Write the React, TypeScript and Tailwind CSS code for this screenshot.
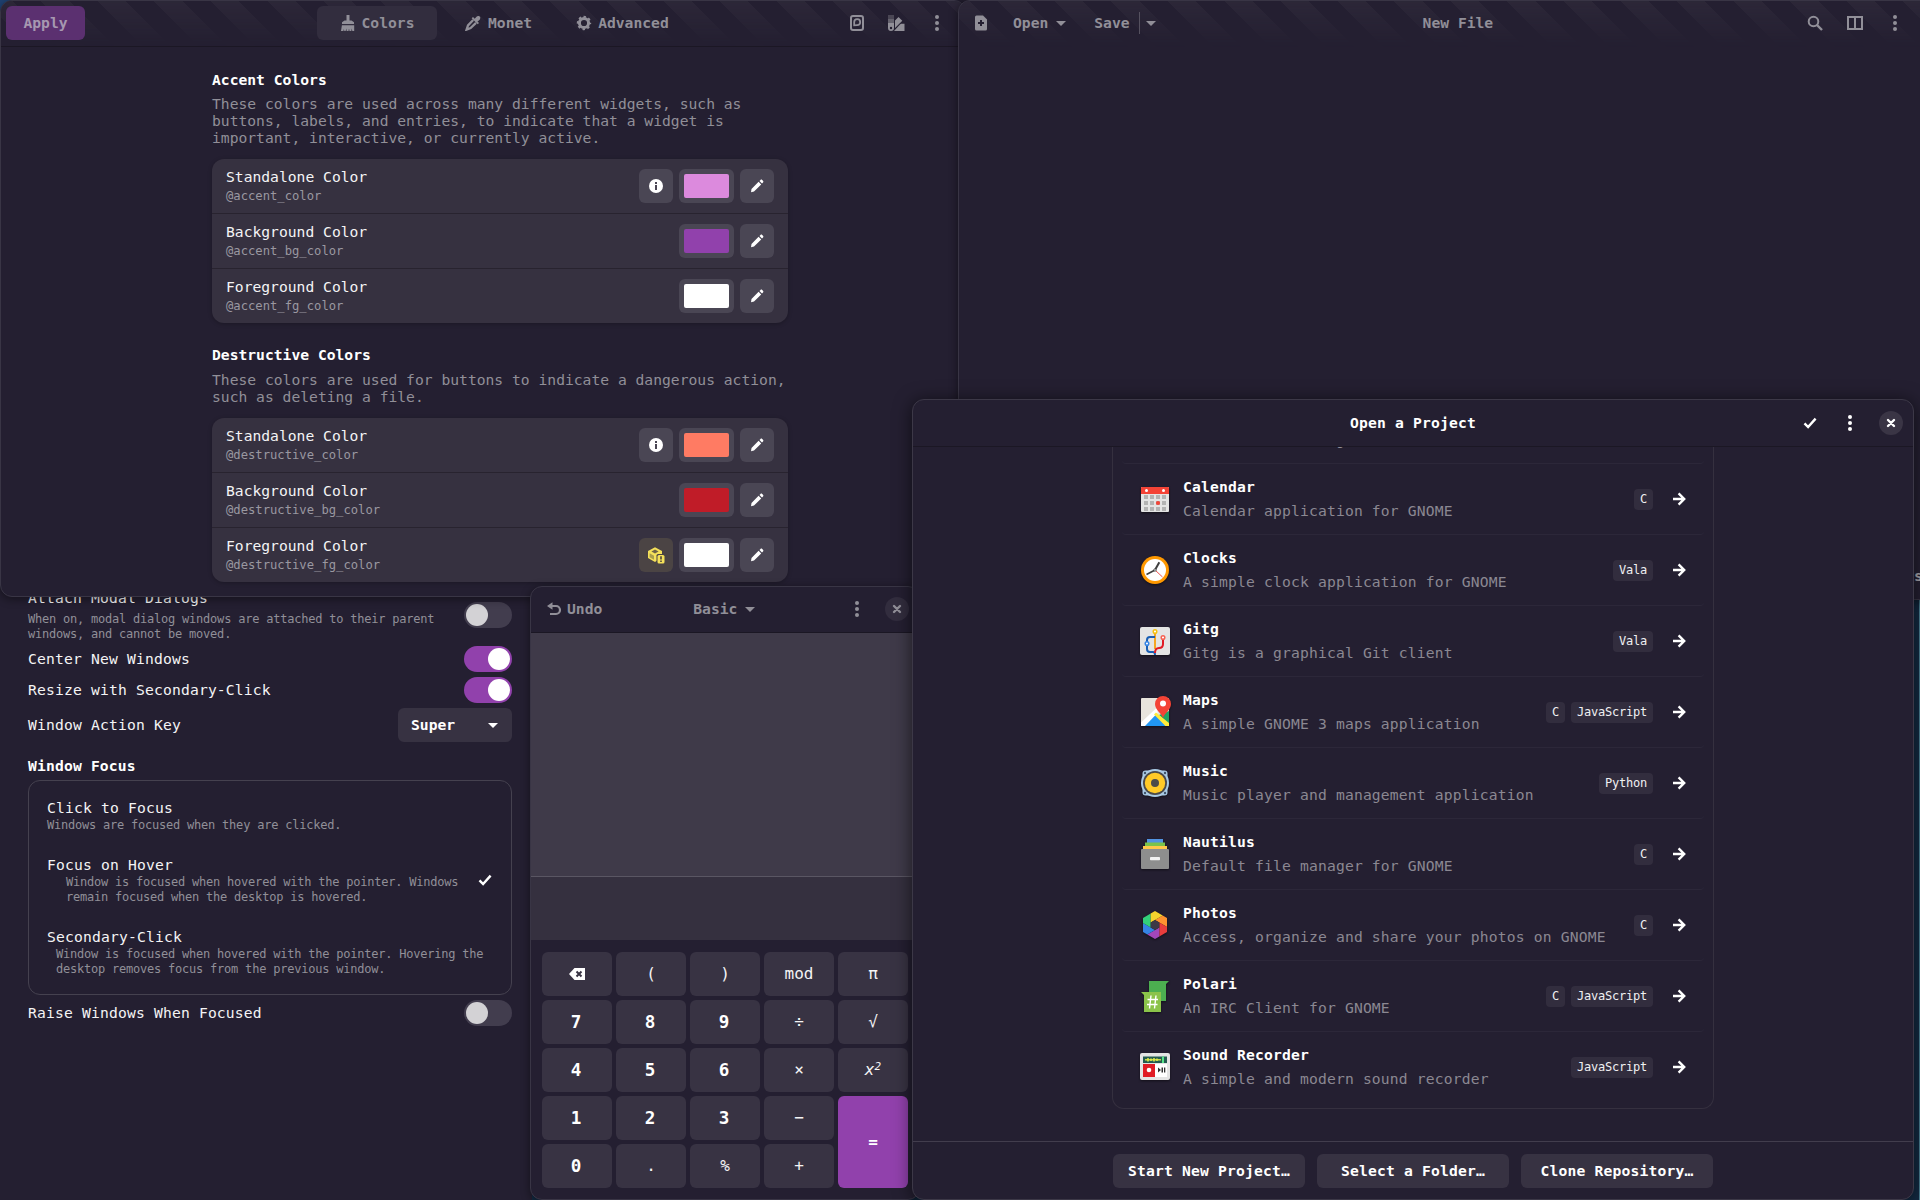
import React from "react";

type P = { className?: string };

const Dots = ({ className = "" }: P) => (
  <svg width="16" height="16" viewBox="0 0 16 16" fill="currentColor" className={className}>
    <circle cx="8" cy="2" r="2" /><circle cx="8" cy="8" r="2" /><circle cx="8" cy="14" r="2" />
  </svg>
);
const Caret = ({ className = "" }: P) => (
  <svg width="16" height="16" viewBox="0 0 16 16" fill="currentColor" className={className}><path d="M3 6h10l-5 5z" /></svg>
);
const Check = ({ className = "" }: P) => (
  <svg width="16" height="16" viewBox="0 0 16 16" fill="none" stroke="currentColor" strokeWidth="2.4" className={className}><path d="M2.5 8.300l3.600 3.700L13.600 3.600" /></svg>
);
const Close = () => (
  <svg width="16" height="16" viewBox="0 0 16 16" fill="none" stroke="currentColor" strokeWidth="2.4" strokeLinecap="round"><path d="M5 5l6 6M11 5l-6 6" /></svg>
);
const Pencil = () => (
  <svg width="16" height="16" viewBox="0 0 16 16" fill="currentColor"><path d="M9.600 3.800l2.600 2.600-7.200 7.200L2 14.200l.5-3.300zM10.500 2.900l1-1c.5-.5 1.200-.5 1.700 0l.8.8c.5.5.5 1.200 0 1.700l-1 1z" /></svg>
);
const Info = () => (
  <svg width="16" height="16" viewBox="0 0 16 16"><circle cx="8" cy="8" r="7" fill="#fff" /><path d="M7 4h2v2H7zM7 7h2v5H7z" fill="#4a4654" /></svg>
);
const Package = () => (
  <svg width="18" height="18" viewBox="0 0 18 18">
    <path d="M8 1.2L15 5v6l-7 5-7-4V5z" fill="#f5e15a" /><path d="M8 3.4l3.6 2L8 7.6 4.4 5.4z" fill="#6d6348" /><path d="M2.6 7.3L7 9.8v4L2.600 11.300z" fill="#a99d4d" />
    <rect x="9.500" y="8" width="8.500" height="9.500" rx="1.500" fill="#4b4444" /><rect x="10.500" y="9" width="7" height="8.500" rx="1.500" fill="#f5e15a" /><path d="M13.200 10.200h1.600v3.400h-1.600zM13.200 14.400h1.600V16h-1.600z" fill="#4b443f" />
  </svg>
);

const swatches: Record<string, string> = {
  pink: "bg-[#dc8add]", purple: "bg-[#9141ac]", white: "bg-white", salmon: "bg-[#ff7b63]", red: "bg-[#c01c28]",
};

function ColorRow({ title, name, color, extra, last }: { title: string; name: string; color: string; extra?: "info" | "pkg"; last?: boolean }) {
  return (
    <div className={last ? "flex h-[54px] items-center pl-[14px] pr-[14px]" : "flex h-[55px] items-center border-b border-[#28232f] pl-[14px] pr-[14px]"}>
      <div className="flex-1">
        <div className="h-[20px] text-[14.67px] leading-[19px] text-[#f4f4f5]">{title}</div>
        <div className="h-[18px] text-[12.2px] leading-[19px] text-[#9a98a0]">{name}</div>
      </div>
      <div className="flex gap-[6px]">
        {extra === "info" && <div className="flex size-[34px] items-center justify-center rounded-md bg-[#4a4654]"><Info /></div>}
        {extra === "pkg" && <div className="flex size-[34px] items-center justify-center rounded-md bg-[#4b4444]"><Package /></div>}
        <div className="flex h-[34px] w-[55px] items-center justify-center rounded-md bg-[#4a4654]">
          <div className={"h-6 w-[45px] rounded-[2px] " + swatches[color]} />
        </div>
        <div className="flex size-[34px] items-center justify-center rounded-md bg-[#4a4654] text-white"><Pencil /></div>
      </div>
    </div>
  );
}

const Stripes = () => (
  <div className="absolute inset-0 bg-[repeating-linear-gradient(45deg,transparent_0px,transparent_20px,#2c2738_20px,#2c2738_40px)] [mask-image:linear-gradient(to_bottom,black,transparent)]" />
);

function Gradience() {
  return (
    <div className="absolute left-0 top-0 z-20 h-[597px] w-[966px] overflow-hidden rounded-xl border border-[#393545] bg-[#241f31] shadow-[0_2px_10px_rgba(0,0,0,0.45)]">
      <div className="relative h-[46px] border-b border-[#1b1724]">
        <Stripes />
        <div className="relative flex h-[44px] items-center pl-[5px] text-[#918f98]">
          <div className="flex h-[34px] w-[79px] items-center justify-center rounded-md bg-[#5b3070] pb-[1px] text-[14.67px] font-bold text-[#a698b0]">Apply</div>
          <div className="ml-[232px] flex h-[34px] w-[120px] items-center justify-center gap-[6px] rounded-md bg-[#322d3e] text-[14.67px] font-bold">
            <svg width="16" height="16" viewBox="0 0 16 16" fill="currentColor"><path d="M6.500 0h3v5.500h2L14 7.200V9H2V7.200l2.500-1.700h2zM1.900 10.200h12.300V16h-1.900l-.5-2.500-.5 2.500H9.500L9 13.500 8.500 16H6.700l-.5-2.500-.5 2.500H4.300l-.4-2-.5 2H1z" /></svg>
            <span className="-mt-[1px]">Colors</span>
          </div>
          <div className="ml-[28px] flex items-center gap-[6px] text-[14.67px] font-bold">
            <svg width="16" height="16" viewBox="0 0 16 16"><path d="M8 2l6 6-1.300 1.300-6-6z" fill="currentColor" /><path d="M9.500 4l2-2.300c1.200-1.600 5.400-.7 3.200 3L12 7z" fill="currentColor" /><path d="M8.200 5L3 10.400 1.600 14.600l4-1.600L11 7.800" fill="none" stroke="currentColor" strokeWidth="2.300" /></svg>
            <span className="-mt-[1px] ml-[1px]">Monet</span>
          </div>
          <div className="ml-[44px] flex items-center gap-[6px] text-[14.67px] font-bold">
            <svg width="16" height="16" viewBox="0 0 16 16" fill="none" stroke="currentColor"><circle cx="8" cy="8" r="4.600" strokeWidth="3" /><circle cx="8" cy="8" r="6.200" strokeWidth="2" strokeDasharray="2.435 2.435" strokeDashoffset="1.220" /></svg>
            <span className="-mt-[1px]">Advanced</span>
          </div>
          <div className="ml-[180px] flex items-center gap-[23px]">
            <svg width="16" height="16" viewBox="0 0 16 16" fill="none" stroke="currentColor" strokeWidth="2"><rect x="2" y="1" width="12" height="14" rx="2" /><path d="M5.200 10.300V7A3 3 0 1 1 8.200 10.200z" strokeWidth="1.800" /></svg>
            <svg width="17" height="16" viewBox="0 0 17 16" fill="currentColor"><path d="M0 0h6v4H0z" opacity=".35" /><path d="M0 4h6v4H0z" opacity=".6" /><path fillRule="evenodd" d="M0 8h6v5a3 3 0 0 1-6 0zM3 11.800a1.200 1.200 0 1 0 0 2.400 1.200 1.200 0 0 0 0-2.400" /><path d="M7 5.500L10.500 2l3.800 3.800L7 13zM12 9.500l1-.7h3.500V16H6z" /></svg>
            <Dots className="ml-[1px]" />
          </div>
        </div>
      </div>
      <div className="ml-[211px] w-[576px] pt-[23px]">
        <h2 className="h-[20px] text-[14.67px] font-bold leading-[20px] text-white">Accent Colors</h2>
        <p className="mt-[5px] whitespace-nowrap text-[14.67px] leading-[17px] text-[#918f98]">These colors are used across many different widgets, such as<br />buttons, labels, and entries, to indicate that a widget is<br />important, interactive, or currently active.</p>
        <div className="mt-[13px] h-[164px] overflow-hidden rounded-xl bg-[#363140] shadow-[0_1px_4px_rgba(0,0,0,0.25)]">
          <ColorRow title="Standalone Color" name="@accent_color" color="pink" extra="info" />
          <ColorRow title="Background Color" name="@accent_bg_color" color="purple" />
          <ColorRow title="Foreground Color" name="@accent_fg_color" color="white" last />
        </div>
        <h2 className="mt-[22px] h-[20px] text-[14.67px] font-bold leading-[20px] text-white">Destructive Colors</h2>
        <p className="mt-[6px] whitespace-nowrap text-[14.67px] leading-[17px] text-[#918f98]">These colors are used for buttons to indicate a dangerous action,<br />such as deleting a file.</p>
        <div className="mt-[13px] h-[164px] overflow-hidden rounded-xl bg-[#363140] shadow-[0_1px_4px_rgba(0,0,0,0.25)]">
          <ColorRow title="Standalone Color" name="@destructive_color" color="salmon" extra="info" />
          <ColorRow title="Background Color" name="@destructive_bg_color" color="red" />
          <ColorRow title="Foreground Color" name="@destructive_fg_color" color="white" extra="pkg" last />
        </div>
      </div>
    </div>
  );
}

function Editor() {
  return (
    <div className="absolute left-[958px] top-0 z-20 h-[600px] w-[1002px] overflow-hidden rounded-xl border border-[#393545] bg-[#241f31] shadow-[0_2px_10px_rgba(0,0,0,0.45)]">
      <div className="relative h-[46px]">
        <Stripes />
        <div className="relative flex h-[44px] items-center pl-[14px] text-[14.67px] font-bold text-[#918f98]">
          <svg width="16" height="16" viewBox="0 0 16 16"><path d="M2 2a1.500 1.500 0 0 1 1.500-1.500H10l4 4V14a1.500 1.500 0 0 1-1.500 1.500h-9A1.500 1.500 0 0 1 2 14z" fill="currentColor" /><path d="M8 5v6M5 8h6" stroke="#241f31" strokeWidth="2" /></svg>
          <span className="-mt-[1px] ml-[24px]">Open</span><Caret className="ml-[5px]" />
          <span className="-mt-[1px] ml-[25px]">Save</span>
          <span className="ml-[9px] h-[22px] w-px bg-[#55515f]" /><Caret className="ml-[3px]" />
          <span className="-mt-[1px] ml-[264px]">New File</span>
          <div className="ml-[314px] flex items-center gap-6">
            <svg width="16" height="16" viewBox="0 0 16 16" fill="none" stroke="currentColor" strokeWidth="2"><circle cx="6.500" cy="6.500" r="4.800" /><path d="M10 10l5 5" strokeWidth="2.400" /></svg>
            <svg width="16" height="16" viewBox="0 0 16 16" fill="none" stroke="currentColor" strokeWidth="2"><path d="M1 2h14v12H1zM8 2v12" /></svg>
            <Dots />
          </div>
        </div>
      </div>
      <div className="mt-[519px] h-[24px] pl-[955px] text-[14.67px] font-bold leading-[20px] text-[#a9a7ae]">s</div>
    </div>
  );
}

function Toggle({ on }: { on?: boolean }) {
  return on ? (
    <span className="flex h-[26px] w-[48px] items-center justify-end rounded-full bg-[#9141ac] p-[2px]"><span className="size-[22px] rounded-full bg-white" /></span>
  ) : (
    <span className="flex h-[26px] w-[48px] items-center rounded-full bg-[#423d4e] p-[2px]"><span className="size-[22px] rounded-full bg-[#d3d2d5]" /></span>
  );
}

const LABEL = "text-[14.67px] leading-[20px] tracking-[0.17px] text-[#f4f4f5] whitespace-pre";
const SMALL = "text-[12px] leading-[15px] tracking-[-0.22px] text-[#918f98] whitespace-pre";

function Tweaks() {
  return (
    <div className="absolute left-0 top-[580px] z-10 h-[620px] w-[532px] bg-[#241f31] pl-[28px] pr-[20px]">
      <div className="flex h-[62px] items-start justify-between pt-[8px]">
        <div>
          <div className={LABEL}>Attach Modal Dialogs</div>
          <div className={"mt-[4px] " + SMALL}>{"When on, modal dialog windows are attached to their parent\nwindows, and cannot be moved."}</div>
        </div>
        <span className="mt-[14px]"><Toggle /></span>
      </div>
      <div className="mt-[4px] flex h-[26px] items-center justify-between"><span className={LABEL}>Center New Windows</span><Toggle on /></div>
      <div className="mt-[5px] flex h-[26px] items-center justify-between"><span className={LABEL}>Resize with Secondary-Click</span><Toggle on /></div>
      <div className="mt-[5px] flex h-[34px] items-center justify-between">
        <span className={LABEL}>Window Action Key</span>
        <span className="flex h-[34px] w-[114px] items-center justify-between rounded-md bg-[#373242] pl-[13px] pr-[11px] text-[14.67px] font-bold text-white">Super<Caret /></span>
      </div>
      <div className="mt-[14px] h-[20px] text-[14.67px] font-bold leading-[20px] tracking-[0.16px] text-white">Window Focus</div>
      <div className="mt-[4px] h-[215px] rounded-xl border border-[#45414f] pl-[18px] pt-[17px]">
        <div className={LABEL}>Click to Focus</div>
        <div className={SMALL}>Windows are focused when they are clicked.</div>
        <div className="relative mt-[22px]">
          <div className={LABEL}>Focus on Hover</div>
          <div className={"pl-[19px] " + SMALL}>{"Window is focused when hovered with the pointer. Windows\nremain focused when the desktop is hovered."}</div>
          <Check className="absolute right-[18px] top-[17px] text-white" />
        </div>
        <div className="mt-[22px]">
          <div className={LABEL}>Secondary-Click</div>
          <div className={"pl-[9px] " + SMALL}>{"Window is focused when hovered with the pointer. Hovering the\ndesktop removes focus from the previous window."}</div>
        </div>
      </div>
      <div className="mt-[5px] flex h-[26px] items-center justify-between"><span className={LABEL}>Raise Windows When Focused</span><Toggle /></div>
    </div>
  );
}

const KEY = "flex items-center justify-center rounded-md bg-[#383343] text-[16px] text-[#f4f4f5]";
const DIGIT = "flex items-center justify-center rounded-md bg-[#383343] pr-[2px] text-[17.6px] font-bold text-white";

function Calculator() {
  const keys = ["⌫", "(", ")", "mod", "π", "7", "8", "9", "÷", "√", "4", "5", "6", "×", "x", "1", "2", "3", "−", "=", "0", ".", "%", "+"];
  return (
    <div className="absolute left-[530px] top-[586px] z-30 h-[614px] w-[390px] overflow-hidden rounded-xl border border-[#393545] bg-[#241f31] shadow-[0_2px_10px_rgba(0,0,0,0.45)]">
      <div className="flex h-[46px] items-center border-b border-[#1b1724] pb-[2px] pl-[15px] text-[14.67px] font-bold text-[#918f98]">
        <svg width="16" height="16" viewBox="0 0 16 16" fill="none" stroke="currentColor" strokeWidth="2.200"><path d="M3 5h7a4 4 0 0 1 0 8H4" /><path d="M6.500 1.200v7.600L1 5z" fill="currentColor" stroke="none" /></svg>
        <span className="ml-[5px]">Undo</span>
        <span className="ml-[91px]">Basic</span><Caret className="ml-[5px]" />
        <Dots className="ml-[91px]" />
        <span className="ml-[20px] flex size-6 items-center justify-center rounded-full bg-[#322d3e]"><Close /></span>
      </div>
      <div className="h-[243px] bg-[#3f3a49]" />
      <div className="h-[64px] border-t border-[#5a5663] bg-[#35303f]" />
      <div className="ml-[11px] mt-[12px] grid w-[366px] auto-rows-[44px] grid-cols-5 gap-x-[4px] gap-y-[4px]">
        {keys.map((k) => {
          if (k === "=") return <div key={k} className="row-span-2 flex items-center justify-center rounded-md bg-[#9141ac] text-[16px] font-bold text-white">=</div>;
          if (k === "⌫") return (
            <div key={k} className={KEY}>
              <svg width="16" height="16" viewBox="0 0 16 16"><path d="M5.500 2H16v12H5.500L0 8z" fill="#fff" /><path d="M7.500 5.500l5 5M12.500 5.500l-5 5" stroke="#383343" strokeWidth="2" /></svg>
            </div>
          );
          if (k === "x") return <div key={k} className={KEY + " italic"}><span>x<sup className="text-[11px]">2</sup></span></div>;
          return <div key={k} className={/[0-9]/.test(k) ? DIGIT : KEY}>{k}</div>;
        })}
      </div>
    </div>
  );
}

const I = ({ children }: { children: React.ReactNode }) => (
  <svg width="32" height="32" viewBox="0 0 32 32" className="shrink-0 drop-shadow-[0_1px_1px_rgba(0,0,0,0.5)]">{children}</svg>
);

const icons: Record<string, React.ReactNode> = {
  Calendar: (
    <I>
      <rect x="2" y="4" width="28" height="25" rx="1" fill="#e4e4e4" /><path d="M2 5a1 1 0 0 1 1-1h26a1 1 0 0 1 1 1v6H2z" fill="#f44336" />
      <circle cx="7.500" cy="7.500" r="1.500" fill="#fff" /><circle cx="24.500" cy="7.500" r="1.500" fill="#fff" />
      {[5, 11, 17, 23].map((x) => [12, 18, 24].map((y) => <rect key={x + "-" + y} x={x} y={y} width="4" height="4" fill="#b3b3b3" />))}
      <circle cx="19" cy="20" r="2.100" fill="#f44336" />
    </I>
  ),
  Clocks: (
    <I>
      <circle cx="16" cy="16" r="14" fill="#ff9800" /><circle cx="16" cy="16" r="11" fill="#fff" />
      <path d="M16 16l7.500 7" stroke="#ef5350" /><path d="M16 16l4.300-7.800" stroke="#3f3f3f" strokeWidth="2" /><path d="M16 16l-8.500 4.500" stroke="#3f3f3f" strokeWidth="1.500" /><circle cx="16" cy="16" r="1.600" fill="#3f3f3f" /><circle cx="16" cy="16" r=".8" fill="#fff" />
    </I>
  ),
  Gitg: (
    <I>
      <rect x="1" y="2" width="30" height="28" rx="2" fill="#e4e4e4" />
      <g fill="none" strokeWidth="2"><path d="M16 8v16" stroke="#f5a623" /><path d="M16 12h-5a3 3 0 0 0-3 3v9q0 3 3 3h3q2 0 2 3" stroke="#1a5fb4" /><path d="M24 13v6q0 4-4 4-4 0-4 5" stroke="#e01b24" /></g>
      <circle cx="16" cy="6.500" r="1.800" fill="#fff" stroke="#f5c211" strokeWidth="1.500" /><circle cx="24" cy="12.500" r="1.800" fill="#fff" stroke="#f66151" strokeWidth="1.500" /><circle cx="8" cy="18.500" r="1.800" fill="#fff" stroke="#3584e4" strokeWidth="1.500" />
    </I>
  ),
  Maps: (
    <I>
      <rect x="2" y="2" width="28" height="28" rx="1" fill="#e8e4dc" /><path d="M30 15v14L20 19z" fill="#1fa363" /><path d="M5 30l11-12 11 12z" fill="#2196f3" />
      <path d="M2 30v-3.500L18.500 11v6L6 30z" fill="#fff" /><path d="M17 16.500l13 10.500v3h-3.500L15 18.500z" fill="#ffeb3b" />
      <path d="M24 0a8 8 0 0 1 8 8c0 6-6.500 9-8 14-1.500-5-8-8-8-14a8 8 0 0 1 8-8z" fill="#f44336" /><circle cx="24" cy="7.500" r="3" fill="#fff" />
    </I>
  ),
  Music: (
    <I>
      <rect x="3.500" y="3.500" width="25" height="25" rx="3" fill="#aacbe6" /><circle cx="16" cy="16" r="14" fill="#aacbe6" />
      <circle cx="6" cy="6" r="1.200" fill="#41566b" /><circle cx="26" cy="6" r="1.200" fill="#41566b" /><circle cx="6" cy="26" r="1.200" fill="#41566b" /><circle cx="26" cy="26" r="1.200" fill="#41566b" />
      <circle cx="16" cy="16" r="12" fill="#4a4a4a" /><circle cx="16" cy="16" r="10.200" fill="#ffca28" /><circle cx="16" cy="16" r="4" fill="#4a4a4a" />
    </I>
  ),
  Nautilus: (
    <I>
      <path d="M8 1h16v4H8z" fill="#5294e2" /><path d="M6 4.500h20v4H6z" fill="#7bc34a" /><path d="M4 8h24v4H4z" fill="#ffc84a" /><rect x="2" y="11" width="28" height="20" rx="1" fill="#8e8e8e" /><rect x="11" y="19" width="10" height="3.200" rx=".8" fill="#f2f2f2" />
    </I>
  ),
  Photos: (
    <I>
      <path d="M16 11l4.300 2.500L28 18V9l-4.300-2.500z" fill="#ff9330" />
      <path d="M20.300 13.500v14L28 23v-5z" fill="#e93d3d" />
      <path d="M20.300 18.500L8.300 25.500 16 30l4.300-2.500z" fill="#a347ba" />
      <path d="M16 21L4 14v9l4.300 2.500z" fill="#3584e4" />
      <path d="M11.700 18.500v-14L4 9v5z" fill="#33d17a" />
      <path d="M11.700 13.500l12-7L16 2l-4.300 2.500z" fill="#f6d32d" />
      <path d="M16 11l4.300 2.500v5L16 21l-4.300-2.500v-5z" fill="#3d3846" />
    </I>
  ),
  Polari: (
    <I>
      <path d="M10 1h20l-3 3v17H10z" fill="#4caf50" /><path d="M2 12h20v20H5V15z" fill="#8bc34a" />
      <path d="M12 15.500l-1.500 13M17 15.500l-1.500 13M8.500 19.500h10.500M8 24.500h10.500" stroke="#fff" strokeWidth="1.400" />
    </I>
  ),
  "Sound Recorder": (
    <I>
      <rect x="1" y="2" width="30" height="27" rx="2" fill="#e4e4e4" /><path d="M4 5.500h24V12H4z" fill="#245c50" /><path d="M6 8.800h16" stroke="#e5f04a" strokeWidth="1.300" /><path d="M9 7v3.600M12 7.500v2.600M15 7v3.600M18 7.500v2.600" stroke="#e5f04a" strokeWidth="1.500" /><path d="M23 5.500h2V12h-2z" fill="#57e389" />
      <path d="M4 13h12v13H4z" fill="#e01b24" /><path d="M16 13h12v13H16z" fill="#fff" /><circle cx="10" cy="19" r="2.300" fill="#fff" /><path d="M19 16.500l3 2.500-3 2.500zM22.500 16.500H24v5h-1.500zM25 16.500h1.300v5H25z" fill="#333" />
    </I>
  ),
};

const projects: [string, string, string[]][] = [
  ["Calendar", "Calendar application for GNOME", ["C"]],
  ["Clocks", "A simple clock application for GNOME", ["Vala"]],
  ["Gitg", "Gitg is a graphical Git client", ["Vala"]],
  ["Maps", "A simple GNOME 3 maps application", ["C", "JavaScript"]],
  ["Music", "Music player and management application", ["Python"]],
  ["Nautilus", "Default file manager for GNOME", ["C"]],
  ["Photos", "Access, organize and share your photos on GNOME", ["C"]],
  ["Polari", "An IRC Client for GNOME", ["C", "JavaScript"]],
  ["Sound Recorder", "A simple and modern sound recorder", ["JavaScript"]],
];

function ProjectDialog() {
  return (
    <div className="absolute left-[912px] top-[399px] z-40 flex h-[801px] w-[1002px] flex-col overflow-hidden rounded-xl border border-[#3c3847] bg-[#241f31] tracking-[0.17px] shadow-[0_2px_18px_rgba(0,0,0,0.6)]">
      <div className="flex h-[47px] shrink-0 items-center border-b border-[#1b1724] text-white">
        <span className="ml-[437px] flex-1 text-[14.67px] font-bold">Open a Project</span>
        <Check /><Dots className="ml-6" />
        <span className="ml-[21px] mr-[10px] flex size-6 items-center justify-center rounded-full bg-[#3a3545]"><Close /></span>
      </div>
      <div className="ml-[199px] h-[662px] w-[602px] shrink-0 overflow-hidden rounded-b-xl border-x border-b border-[#35303f] px-[9px]">
        <div className="h-[17px] overflow-hidden rounded-b-[4px] border-b border-[#2c2739]">
          <div className="-mt-[17px] pl-[60px] text-[14.67px] leading-[20px] text-[#918f98]"><span className="ml-[154px]">g</span></div>
        </div>
        {projects.map(([name, desc, tags], i) => (
          <div key={name} className={i === projects.length - 1 ? "flex h-[70px] items-center pl-[17px]" : "flex h-[71px] items-center rounded-b-[4px] border-b border-[#2c2739] pl-[17px]"}>
            {icons[name]}
            <div className="ml-[12px] flex-1">
              <div className="h-[24px] text-[14.67px] font-bold leading-[24px] text-white">{name}</div>
              <div className="h-[24px] whitespace-nowrap text-[14.67px] leading-[24px] text-[#8b8892]">{desc}</div>
            </div>
            <div className="flex gap-[6px]">
              {tags.map((t) => <span key={t} className="h-[21px] rounded bg-[#322d3e] px-[6px] text-[12px] leading-[21px] tracking-[-0.22px] text-[#f0f0f2]">{t}</span>)}
            </div>
            <svg width="16" height="16" viewBox="0 0 16 16" fill="none" stroke="#fff" strokeWidth="2.400" className="ml-[18px] mr-[17px]"><path d="M2 8h11M7.600 2.400L13.200 8l-5.600 5.600" /></svg>
          </div>
        ))}
      </div>
      <div className="mt-[32px] flex h-[58px] shrink-0 justify-center gap-[12px] border-t border-[#423d4d] pt-[12px] text-[14.67px] font-bold text-white">
        {["Start New Project…", "Select a Folder…", "Clone Repository…"].map((t) => (
          <div key={t} className="flex h-[34px] w-[192px] items-center justify-center whitespace-nowrap rounded-md bg-[#373242]">{t}</div>
        ))}
      </div>
    </div>
  );
}

export default function App() {
  return (
    <div className="relative h-[1200px] w-[1920px] overflow-hidden bg-[#132a42] font-['DejaVu_Sans_Mono',monospace]">
      <div className="absolute left-0 top-0 size-3 bg-[#1f4272]" />
      <div className="absolute right-0 top-[600px] h-[600px] w-px bg-[#4a7f92]" />
      <div className="absolute left-[912px] top-0 h-4 w-[110px] bg-[#241f31]" />
      <div className="absolute right-0 top-0 z-10 h-4 w-4 bg-[#241f31]" />
      <Tweaks />
      <Gradience />
      <Editor />
      <Calculator />
      <ProjectDialog />
    </div>
  );
}
